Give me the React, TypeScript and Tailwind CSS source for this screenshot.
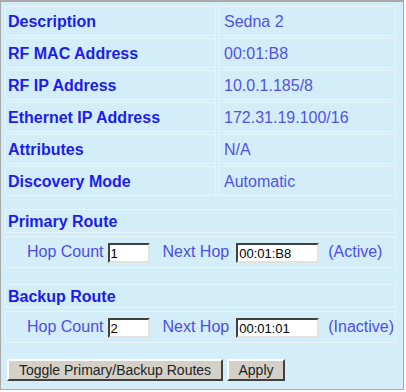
import React from "react";

const rows: [string, string][] = [
  ["Description", "Sedna 2"],
  ["RF MAC Address", "00:01:B8"],
  ["RF IP Address", "10.0.1.185/8"],
  ["Ethernet IP Address", "172.31.19.100/16"],
  ["Attributes", "N/A"],
  ["Discovery Mode", "Automatic"],
];

const cell = "border border-[#e6f5fb] bg-[#d3eef8] flex items-center";

function Input({ value }: { value: string }) {
  return (
    <div className="h-[20px] bg-white border-2 border-t-[#404040] border-l-[#404040] border-r-[#e4e2dc] border-b-[#e4e2dc] flex items-center pl-[1px] text-[13px] leading-none text-black w-full">
      {value}
    </div>
  );
}

function RouteSection({ title, hop, next, status }: { title: string; hop: string; next: string; status: string }) {
  return (
    <div className="flex flex-col">
      <div className={`${cell} h-[24px] pl-[2px] pt-[2px] font-bold text-[16px] text-[#1c1cf0]`}>{title}</div>
      <div className={`${cell} h-[32px] mt-[3px] text-[16px] text-[#4d4de8]`}>
        <span className="ml-[21px]">Hop Count</span>
        <div className="ml-[4px] w-[42px] mt-[2px]"><Input value={hop} /></div>
        <span className="ml-[13px]">Next Hop</span>
        <div className="ml-[7px] w-[83px] mt-[2px]"><Input value={next} /></div>
        <span className="ml-[9px]">{status}</span>
      </div>
    </div>
  );
}

function Btn({ children, w }: { children: React.ReactNode; w: string }) {
  return (
    <div className={`${w} h-[22px] bg-[#d4d0c8] border-2 border-t-white border-l-white border-r-[#404040] border-b-[#404040] flex items-center justify-center text-[14px] text-[#222] leading-none`}>
      {children}
    </div>
  );
}

export default function App() {
  return (
    <div className="w-[406px] h-[392px] bg-white font-['Liberation_Sans',Arial,sans-serif]">
      <div className="w-[404px] h-[390px] bg-[#d3eef8] border-[#a9a9a9] border-t-2 border-l border-r border-b pt-[4px] pl-[4px] pr-[7px]">
        <div className="flex flex-col gap-[2px]">
          {rows.map(([k, v]) => (
            <div key={k} className="flex gap-[2px] h-[30px]">
              <div className={`${cell} w-[211px] pl-[2px] pt-[1px] font-bold text-[16px] text-[#1c1cf0]`}>{k}</div>
              <div className={`${cell} flex-1 pl-[5px] pt-[1px] text-[16px] text-[#5252e6]`}>{v}</div>
            </div>
          ))}
        </div>
        <div className="mt-[13px]">
          <RouteSection title="Primary Route" hop="1" next="00:01:B8" status="(Active)" />
        </div>
        <div className="mt-[16px]">
          <RouteSection title="Backup Route" hop="2" next="00:01:01" status="(Inactive)" />
        </div>
        <div className="flex gap-[4px] mt-[16px] ml-[2px]">
          <Btn w="w-[216px]">Toggle Primary/Backup Routes</Btn>
          <Btn w="w-[58px]">Apply</Btn>
        </div>
      </div>
    </div>
  );
}
